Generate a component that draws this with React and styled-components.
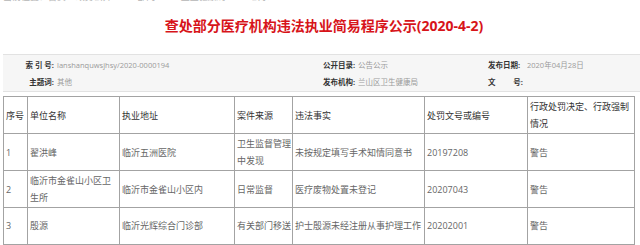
import React from 'react'
import styled, { createGlobalStyle } from 'styled-components'

const red = '#d7141a'
const border = '#a3a3a3'
const labelColor = '#333333'
const valueColor = '#9a9a9a'
const bodyText = '#666666'

const GlobalStyle = createGlobalStyle`
    html, body {
        margin: 0;
        padding: 0;
        background: #ffffff;
        overflow: hidden;
    }
    body {
        font-family: "Open Sans", "Noto Sans CJK SC", sans-serif;
    }
`

const Page = styled.div`
    width: 640px;
    height: 245px;
    overflow: hidden;
    padding: 0 3px;
    box-sizing: border-box;
`

const Crumbs = styled.div`
    display: flex;
    gap: 18px;
    margin-top: -10px;
    height: 13px;
    font-size: 9px;
    line-height: 13px;
    color: #b5b5b5;
`

const Title = styled.h1`
    margin: 0 0 18px;
    padding: 13px 0 0 8px;
    text-align: center;
    font-size: 14px;
    line-height: 20px;
    font-weight: bold;
    color: ${red};
`

const InfoBox = styled.div`
    display: grid;
    grid-template-columns: 51px 269px 35px 130px 39px 1fr;
    grid-auto-rows: 17px;
    align-items: center;
    margin-right: -3px;
    padding: 1px 0;
    background: #f6f6f6;
    border-top: 1px solid #e2e2e2;
    border-bottom: 1px solid #e2e2e2;
    font-size: 7.5px;
`

const Label = styled.span`
    font-weight: bold;
    color: ${labelColor};
    white-space: pre;
    text-align: ${({ $right }) => ($right ? 'right' : 'left')};
`

const SpreadLabel = styled(Label)`
    display: flex;
    justify-content: space-between;
    padding-right: 4px;
`

const Value = styled.span`
    color: ${valueColor};
    padding-left: ${({ $pad }) => $pad || 0}px;
    white-space: nowrap;
`

const Table = styled.table`
    margin-top: 4px;
    width: 631px;
    table-layout: fixed;
    border-collapse: collapse;
    border: 1px solid ${border};
    font-size: 9px;
    text-align: left;

    & th,
    & td {
        border: 1px solid ${border};
        padding: 1px 1px 1px 2px;
        line-height: 17px;
        vertical-align: middle;
    }
`

const Header = styled.th`
    height: 34px;
    font-weight: normal;
    color: ${labelColor};
`

const Cell = styled.td`
    height: 33.5px;
    color: ${bodyText};
    white-space: ${({ $nowrap }) => ($nowrap ? 'nowrap' : 'normal')};
`

const columns = [
    { title: '序号', width: 24 },
    { title: '单位名称', width: 92 },
    { title: '执业地址', width: 115 },
    { title: '案件来源', width: 58 },
    { title: '违法事实', width: 132 },
    { title: '处罚文号或编号', width: 103 },
    { title: '行政处罚决定、行政强制情况', width: 107 },
]

const rows = [
    ['1', '翟洪峰', '临沂五洲医院', '卫生监督管理中发现', '未按规定填写手术知情同意书', '20197208', '警告'],
    ['2', '临沂市金雀山小区卫生所', '临沂市金雀山小区内', '日常监督', '医疗废物处置未登记', '20207043', '警告'],
    ['3', '殷源', '临沂光辉综合门诊部', '有关部门移送', '护士殷源未经注册从事护理工作', '20202001', '警告'],
]

export default function App() {
    return (
        <Page>
            <GlobalStyle />
            <Crumbs>
                <span>当前位置：首页 &gt; 政务公开</span>
                <span>&gt; 部门</span>
                <span>&gt; 卫生健康局</span>
                <span>&gt; 公示</span>
            </Crumbs>
            <Title>查处部分医疗机构违法执业简易程序公示(2020-4-2)</Title>
            <InfoBox>
                <Label $right>索 引 号:</Label>
                <Value $pad={3}>lanshanquwsjhsy/2020-0000194</Value>
                <Label>公开目录:</Label>
                <Value>公告公示</Value>
                <Label>发布日期:</Label>
                <Value>2020年04月28日</Value>
                <Label $right>主题词:</Label>
                <Value $pad={3}>其他</Value>
                <Label>发布机构:</Label>
                <Value>兰山区卫生健康局</Value>
                <SpreadLabel>
                    <span>文</span>
                    <span>号:</span>
                </SpreadLabel>
                <Value />
            </InfoBox>
            <Table>
                <colgroup>
                    {columns.map((c) => (
                        <col key={c.title} style={{ width: c.width }} />
                    ))}
                </colgroup>
                <thead>
                    <tr>
                        {columns.map((c) => (
                            <Header key={c.title}>{c.title}</Header>
                        ))}
                    </tr>
                </thead>
                <tbody>
                    {rows.map((r) => (
                        <tr key={r[0]}>
                            {r.map((v, i) => (
                                <Cell key={i} $nowrap={i === 4}>{v}</Cell>
                            ))}
                        </tr>
                    ))}
                </tbody>
            </Table>
        </Page>
    )
}
